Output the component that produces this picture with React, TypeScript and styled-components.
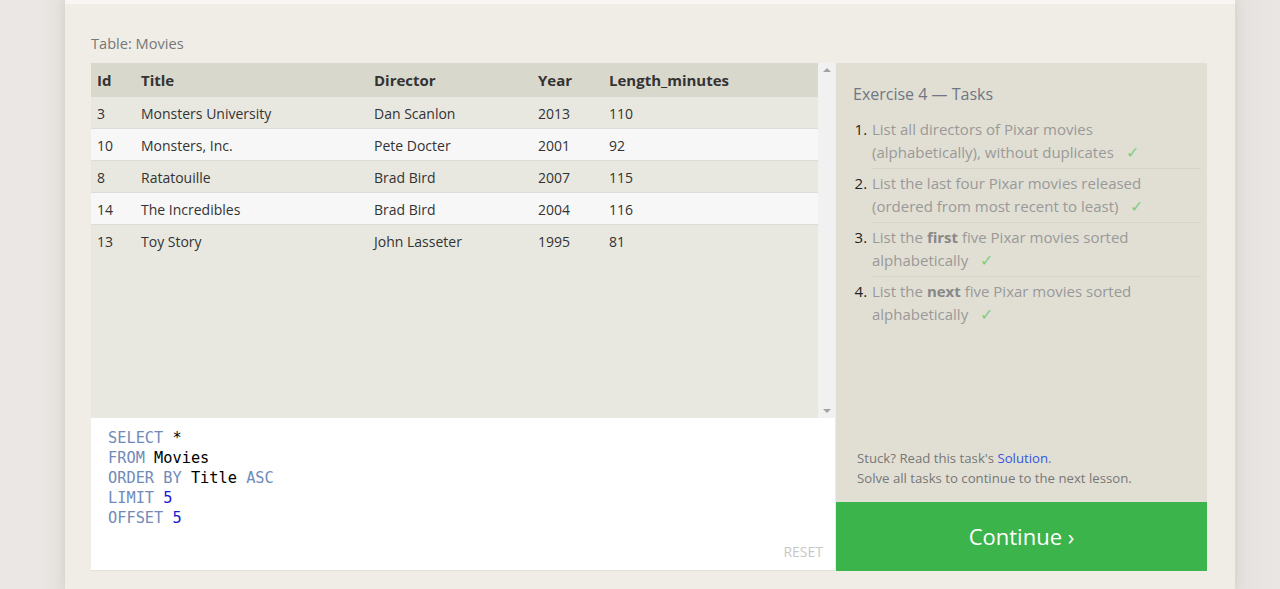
import React from "react";
import styled, { createGlobalStyle } from "styled-components";

const Global = createGlobalStyle`
  html, body { margin: 0; padding: 0; }
  body {
    background: #ebe7e4;
    font-family: "Open Sans", "Noto Sans", sans-serif;
    overflow: hidden;
  }
`;

const Page = styled.div`
  width: 1280px;
  height: 589px;
  overflow: hidden;
  display: flex;
  background: linear-gradient(90deg, #ebe7e4 0, #ebe7e4 40px, #e3dfdb 65px, #e3dfdb 1235px, #e6e2df 1245px, #eae6e4 1280px);
`;

const Panel = styled.div`
  margin-left: 65px;
  width: 1170px;
  height: 589px;
  background: #efede6;
  box-shadow: 0 0 12px rgba(0, 0, 0, 0.08);
  display: flex;
  flex-direction: column;
`;

const TopStrip = styled.div`
  height: 4px;
  background: #f7f6f2;
`;

const Content = styled.div`
  padding: 29px 28px 0 26px;
  display: flex;
  flex-direction: column;
`;

const Caption = styled.div`
  font-size: 14.6px;
  color: #777;
  line-height: 20px;
  margin-bottom: 10px;
`;

const Workspace = styled.div`
  display: flex;
  height: 508px;
`;

const LeftCol = styled.div`
  width: 744px;
  display: flex;
  flex-direction: column;
  border-bottom: 1px solid #e2e0d8;
`;

const TableArea = styled.div`
  height: 355px;
  display: flex;
  background: #e9e8e0;
`;

const TableScroll = styled.div`
  flex: 1;
  display: flex;
  flex-direction: column;
`;

const Row = styled.div<{ $kind: "head" | "odd" | "even" }>`
  display: grid;
  grid-template-columns: 44px 233px 164px 71px 1fr;
  padding-left: 6px;
  box-sizing: border-box;
  height: ${(p) => (p.$kind === "head" ? "34px" : "32px")};
  padding-top: ${(p) => (p.$kind === "head" ? "0" : "1px")};
  align-items: center;
  background: ${(p) =>
    p.$kind === "head" ? "#d9d8cc" : p.$kind === "even" ? "#f7f7f7" : "#e9e8e0"};
  border-bottom: ${(p) => (p.$kind === "head" ? "none" : "1px solid #dddcd6")};
  &:last-child {
    border-bottom: none;
  }
  color: #333;
  font-size: ${(p) => (p.$kind === "head" ? "15px" : "14px")};
  font-weight: ${(p) => (p.$kind === "head" ? 700 : 400)};
`;

const Cell = styled.div`
  white-space: nowrap;
`;

const ScrollBar = styled.div`
  width: 17px;
  background: #f1f1f1;
  display: flex;
  flex-direction: column;
  justify-content: space-between;
  align-items: center;
  padding: 5px 0;
  box-sizing: border-box;
`;

const Arrow = styled.div<{ $up?: boolean }>`
  width: 0;
  height: 0;
  border-left: 4px solid transparent;
  border-right: 4px solid transparent;
  ${(p) => (p.$up ? "border-bottom: 4px solid #a3a3a3;" : "border-top: 4px solid #a3a3a3;")}
`;

const Editor = styled.div`
  flex: 1;
  background: #fff;
  display: flex;
  flex-direction: column;
  justify-content: space-between;
  padding: 10px 12px 9px 17px;
`;

const Code = styled.pre`
  margin: 0;
  font-family: "DejaVu Sans Mono", "Liberation Mono", monospace;
  font-size: 15.3px;
  line-height: 20px;
  color: #000;
`;

const Kw = styled.span`
  color: #708bb8;
`;

const Num = styled.span`
  color: #1a1ad6;
`;

const Reset = styled.div`
  align-self: flex-end;
  font-size: 14px;
  color: #c8c8c8;
  line-height: 18px;
`;

const RightCol = styled.div`
  width: 371px;
  margin-left: 1px;
  display: flex;
  flex-direction: column;
`;

const Tasks = styled.div`
  flex: 1;
  background: #e1dfd4;
  padding: 19px 6px 14px 17px;
  display: flex;
  flex-direction: column;
`;

const TaskTitle = styled.div`
  font-size: 16px;
  color: #6f7686;
  line-height: 24px;
  margin-bottom: 12px;
`;

const TaskList = styled.ol`
  margin: 0;
  padding: 0 0 0 18px;
  list-style: decimal;
  color: #222;
  font-size: 15px;
`;

const TaskItem = styled.li`
  line-height: 23px;
  padding: 0 0 4px 1px;
  margin-bottom: 3px;
  border-bottom: 1px solid #d6d4c9;
  &:last-child {
    border-bottom: none;
  }
`;

const TaskText = styled.span`
  color: #999;
  b {
    color: #888;
    font-weight: 700;
  }
`;

const Check = styled.span`
  color: #80cc85;
  margin-left: 12px;
  font-size: 16px;
`;

const Spacer = styled.div`
  flex: 1;
`;

const Hint = styled.div`
  font-size: 13.2px;
  color: #777;
  line-height: 20px;
  padding-left: 4px;
  a {
    color: #3355dd;
    text-decoration: none;
  }
`;

const ContinueButton = styled.div`
  height: 69px;
  background: #3bb44b;
  color: #fff;
  font-size: 22px;
  display: flex;
  align-items: center;
  justify-content: center;
  padding-bottom: 2px;
  box-sizing: border-box;
`;

const rows = [
  ["3", "Monsters University", "Dan Scanlon", "2013", "110"],
  ["10", "Monsters, Inc.", "Pete Docter", "2001", "92"],
  ["8", "Ratatouille", "Brad Bird", "2007", "115"],
  ["14", "The Incredibles", "Brad Bird", "2004", "116"],
  ["13", "Toy Story", "John Lasseter", "1995", "81"],
];

export default function App() {
  return (
    <Page>
      <Global />
      <Panel>
        <TopStrip />
        <Content>
          <Caption>Table: Movies</Caption>
          <Workspace>
            <LeftCol>
              <TableArea>
                <TableScroll>
                  <Row $kind="head">
                    <Cell>Id</Cell>
                    <Cell>Title</Cell>
                    <Cell>Director</Cell>
                    <Cell>Year</Cell>
                    <Cell>Length_minutes</Cell>
                  </Row>
                  {rows.map((r, i) => (
                    <Row key={r[0]} $kind={i % 2 === 0 ? "odd" : "even"}>
                      {r.map((c, j) => (
                        <Cell key={j}>{c}</Cell>
                      ))}
                    </Row>
                  ))}
                </TableScroll>
                <ScrollBar>
                  <Arrow $up />
                  <Arrow />
                </ScrollBar>
              </TableArea>
              <Editor>
                <Code>
                  <Kw>SELECT</Kw> *{"\n"}
                  <Kw>FROM</Kw> Movies{"\n"}
                  <Kw>ORDER BY</Kw> Title <Kw>ASC</Kw>{"\n"}
                  <Kw>LIMIT</Kw> <Num>5</Num>{"\n"}
                  <Kw>OFFSET</Kw> <Num>5</Num>
                </Code>
                <Reset>RESET</Reset>
              </Editor>
            </LeftCol>
            <RightCol>
              <Tasks>
                <TaskTitle>Exercise 4 — Tasks</TaskTitle>
                <TaskList>
                  <TaskItem>
                    <TaskText>
                      List all directors of Pixar movies (alphabetically), without duplicates
                    </TaskText>
                    <Check>✓</Check>
                  </TaskItem>
                  <TaskItem>
                    <TaskText>
                      List the last four Pixar movies released (ordered from most recent to least)
                    </TaskText>
                    <Check>✓</Check>
                  </TaskItem>
                  <TaskItem>
                    <TaskText>
                      List the <b>first</b> five Pixar movies sorted alphabetically
                    </TaskText>
                    <Check>✓</Check>
                  </TaskItem>
                  <TaskItem>
                    <TaskText>
                      List the <b>next</b> five Pixar movies sorted alphabetically
                    </TaskText>
                    <Check>✓</Check>
                  </TaskItem>
                </TaskList>
                <Spacer />
                <Hint>
                  Stuck? Read this task's <a href="#">Solution</a>.
                  <br />
                  Solve all tasks to continue to the next lesson.
                </Hint>
              </Tasks>
              <ContinueButton>Continue ›</ContinueButton>
            </RightCol>
          </Workspace>
        </Content>
      </Panel>
    </Page>
  );
}
